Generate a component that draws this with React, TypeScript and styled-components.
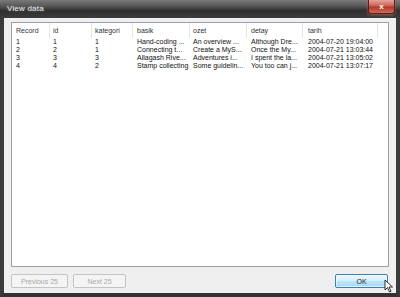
import React from "react";
import styled, { createGlobalStyle } from "styled-components";

const Global = createGlobalStyle`
  html, body { margin: 0; padding: 0; background: #2e2e2e; }
  body { width: 400px; height: 297px; overflow: hidden; font-family: "Liberation Sans", Arial, sans-serif; }
`;

const Window = styled.div`
  position: relative;
  width: 400px;
  height: 297px;
  box-sizing: border-box;
  display: flex;
  flex-direction: column;
  background: linear-gradient(#4a4a4a, #2f2f2f 40%, #3a3a3a);
  border-left: 4px solid #3b3b3b;
  border-right: 4px solid #3b3b3b;
  border-bottom: 4px solid #333;
`;

const TitleBar = styled.div`
  height: 18px;
  margin: 0 -4px;
  padding: 0 0 0 7px;
  display: flex;
  align-items: flex-start;
  justify-content: space-between;
  background: linear-gradient(#7a7a7a 0%, #555 35%, #2e2e2e 60%, #3c3c3c 100%);
`;

const Title = styled.span`
  font-size: 8px;
  line-height: 18px;
  color: #ececec;
  letter-spacing: 0.2px;
  text-shadow: 0 0 3px rgba(255, 255, 255, 0.35);
`;

const CloseButton = styled.div`
  width: 27px;
  height: 14px;
  margin-right: 5px;
  box-sizing: border-box;
  border: 1px solid #5a2020;
  border-top: none;
  border-radius: 0 0 3px 3px;
  background: linear-gradient(#e8a49c 0%, #d06a5e 40%, #b03a2c 55%, #d06a55 100%);
  box-shadow: 0 1px 3px rgba(230, 120, 100, 0.6);
  display: flex;
  align-items: center;
  justify-content: center;
  color: #fff;
  font-size: 8px;
  font-weight: bold;
`;

const Client = styled.div`
  flex: 1;
  display: flex;
  flex-direction: column;
  background: #efefef;
  padding: 4px 7px 5px 7px;
  min-height: 0;
`;

const ListBox = styled.div`
  flex: 1;
  background: #fff;
  border: 1px solid #9aa0a8;
  display: flex;
  flex-direction: column;
  font-size: 7px;
  color: #111;
`;

const HeaderRow = styled.div`
  display: flex;
  height: 15px;
  align-items: stretch;
`;

const HeaderCell = styled.div<{ $w: number; $pl: number; $last?: boolean }>`
  width: ${(p) => p.$w}px;
  flex: ${(p) => (p.$last ? "1" : "none")};
  box-sizing: border-box;
  padding-left: ${(p) => p.$pl}px;
  display: flex;
  align-items: center;
  color: #333;
  border-right: ${(p) => (p.$last ? "none" : "1px solid #e3e5e8")};
  white-space: nowrap;
  overflow: hidden;
`;

const Row = styled.div`
  display: flex;
  height: 8px;
  line-height: 8px;
`;

const Cell = styled.div<{ $w: number; $pl: number }>`
  width: ${(p) => p.$w}px;
  flex: none;
  box-sizing: border-box;
  padding-left: ${(p) => p.$pl}px;
  white-space: nowrap;
  overflow: hidden;
`;

const Footer = styled.div`
  display: flex;
  align-items: center;
  gap: 5px;
  margin-top: 7px;
  height: 14px;
`;

const NavButton = styled.button<{ $w: number }>`
  width: ${(p) => p.$w}px;
  height: 14px;
  padding: 0;
  border: 1px solid #c4c4c4;
  border-radius: 2px;
  background: #f4f4f4;
  color: #a8a8a8;
  font-family: "Liberation Sans", Arial, sans-serif;
  font-size: 7px;
`;

const Spacer = styled.div`
  flex: 1;
`;

const OkButton = styled.button`
  width: 53px;
  height: 14px;
  margin-right: 1px;
  padding: 0;
  border: 1px solid #3c7fb1;
  border-radius: 2px;
  background: linear-gradient(#eaf6fd 0%, #d9f0fc 45%, #bee6fd 50%, #a7d9f5 100%);
  box-shadow: inset 0 0 0 1px rgba(255, 255, 255, 0.6);
  color: #222;
  font-family: "Liberation Sans", Arial, sans-serif;
  font-size: 7px;
`;

const Cursor = styled.svg`
  position: absolute;
  left: 380px;
  top: 279px;
`;

const cols = [
  { name: "Record", w: 38, pl: 4 },
  { name: "id", w: 42, pl: 3 },
  { name: "kategori", w: 41, pl: 3 },
  { name: "basik", w: 57, pl: 4 },
  { name: "ozet", w: 57, pl: 3 },
  { name: "detay", w: 56, pl: 4 },
  { name: "tarih", w: 75, pl: 5 },
];

const rows = [
  ["1", "1", "1", "Hand-coding ...", "An overview ...", "Although Dre...", "2004-07-20 19:04:00"],
  ["2", "2", "1", "Connecting t...", "Create a MyS...", "Once the My...", "2004-07-21 13:03:44"],
  ["3", "3", "3", "Allagash Rive...", "Adventures i...", "I spent the la...", "2004-07-21 13:05:02"],
  ["4", "4", "2", "Stamp collecting", "Some guidelin...", "You too can j...", "2004-07-21 13:07:17"],
];

export default function App() {
  return (
    <>
      <Global />
      <Window>
        <TitleBar>
          <Title>View data</Title>
          <CloseButton>x</CloseButton>
        </TitleBar>
        <Client>
          <ListBox>
            <HeaderRow>
              {cols.map((c) => (
                <HeaderCell key={c.name} $w={c.w} $pl={c.pl}>
                  {c.name}
                </HeaderCell>
              ))}
              <HeaderCell $w={0} $pl={0} $last />
            </HeaderRow>
            {rows.map((r, i) => (
              <Row key={i}>
                {r.map((v, j) => (
                  <Cell key={j} $w={cols[j].w} $pl={cols[j].pl}>
                    {v}
                  </Cell>
                ))}
              </Row>
            ))}
          </ListBox>
          <Footer>
            <NavButton $w={57} disabled>
              Previous 25
            </NavButton>
            <NavButton $w={53} disabled>
              Next 25
            </NavButton>
            <Spacer />
            <OkButton>OK</OkButton>
          </Footer>
        </Client>
        <Cursor width="10" height="14" viewBox="0 0 10 14">
          <path d="M1 1 L1 11 L3.5 8.5 L5.5 13 L7 12.3 L5 8 L8.5 8 Z" fill="#fff" stroke="#000" strokeWidth="0.8" />
        </Cursor>
      </Window>
    </>
  );
}
